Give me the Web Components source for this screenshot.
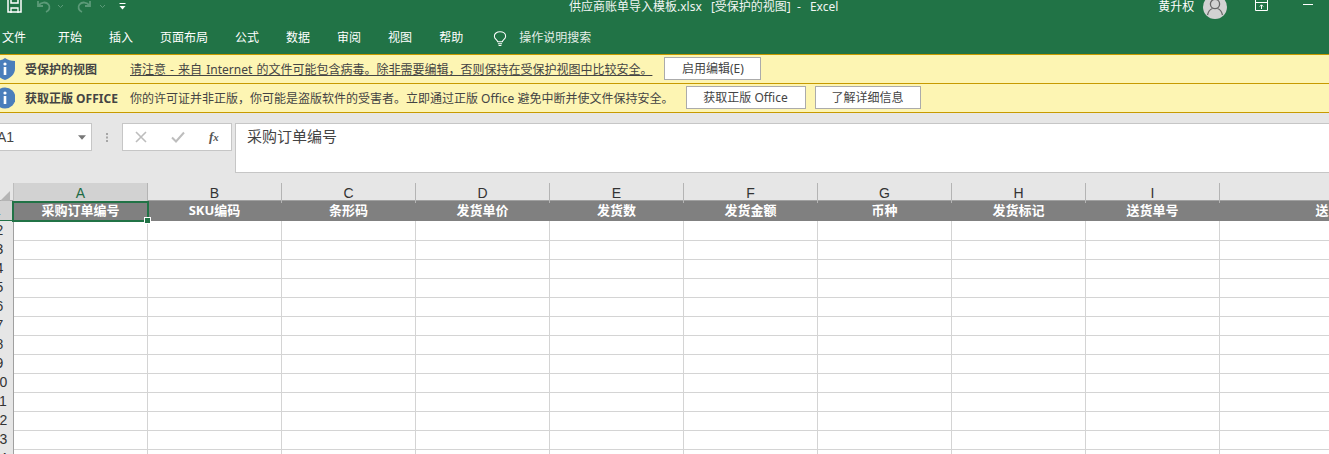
<!DOCTYPE html>
<html>
<head>
<meta charset="utf-8">
<title>Excel</title>
<style>
  html, body { margin: 0; padding: 0; height: 454px; overflow: hidden; background: #e6e6e6; }
  body { font-family: "Noto Sans", "Noto Sans CJK SC", sans-serif; font-size: 12px; color: #444; }
</style>
</head>
<body>
<excel-ribbon></excel-ribbon>
<message-bar heading="受保护的视图" underline>
  请注意 - 来自 Internet 的文件可能包含病毒。除非需要编辑，否则保持在受保护视图中比较安全。
  <bar-button slot="actions" style="margin-left:12px;width:97px">启用编辑(E)</bar-button>
</message-bar>
<message-bar heading="获取正版 OFFICE" round>
  你的许可证并非正版，你可能是盗版软件的受害者。立即通过正版 Office 避免中断并使文件保持安全。
  <bar-button slot="actions" style="margin-left:12px;width:120px">获取正版 Office</bar-button>
  <bar-button slot="actions" style="margin-left:9px;width:106px">了解详细信息</bar-button>
</message-bar>
<formula-bar cell="A1" value="采购订单编号"></formula-bar>
<sheet-grid></sheet-grid>

<script>
const CJK = '"Noto Sans", "Noto Sans CJK SC", sans-serif';

class ExcelRibbon extends HTMLElement {
    constructor() {
        super();
        this.attachShadow({ mode: 'open' });
    }

    connectedCallback() {
        const tabs = ['开始', '插入', '页面布局', '公式', '数据', '审阅', '视图', '帮助'];
        this.shadowRoot.innerHTML = `
            <style>
                :host {
                    display: block;
                    height: 54px;
                    background: #217346;
                    color: #fff;
                    font-family: ${CJK};
                    font-size: 12px;
                    overflow: hidden;
                    white-space: nowrap;
                }
                .title-row {
                    display: grid;
                    grid-template-columns: 569px auto 1fr;
                    height: 27px;
                }
                .qat, .win { display: flex; height: 13px; align-items: flex-start; }
                .qat svg, .win svg { display: block; flex: none; }
                .title { line-height: 13px; color: #f1f6f3; }
                .title span { margin-left: 6px; }
                .title b { font-weight: 400; margin-left: 9px; }
                .win { line-height: 13px; }
                .who { margin-left: 320px; }
                .tabs {
                    display: flex;
                    gap: 27px;
                    height: 22px;
                    line-height: 22px;
                    padding-left: 2px;
                }
                .file { margin-right: 5px; }
                .search { display: flex; color: #e4eee8; }
                .search svg { display: block; margin: 4px 12px 0 3px; }
            </style>
            <div class="title-row">
                <div class="qat">
                    <svg width="15" height="13" style="margin-left:7px" viewBox="0 0 15 13" fill="none" stroke="#fff" stroke-width="1.5">
                        <path d="M1 -1V12H14V-1"/><path d="M4 13V8H11V13" stroke-width="1.3"/><path d="M4 -1V3H11V-1"/>
                    </svg>
                    <svg width="16" height="13" style="margin-left:14px" viewBox="0 0 16 13" fill="none" stroke="#5b9a78" stroke-width="1.8">
                        <path d="M2 1V6H7"/><path d="M2.5 5.5C5 2 10 1.5 12.5 4.5C14.5 7 13.5 10.5 10 12"/>
                    </svg>
                    <svg width="7" height="13" style="margin-left:5px" viewBox="0 0 7 13" fill="none" stroke="#5b9a78"><path d="M1 5L3.5 7.5L6 5"/></svg>
                    <svg width="16" height="13" style="margin-left:12px" viewBox="0 0 16 13" fill="none" stroke="#5b9a78" stroke-width="1.8">
                        <path d="M14 1V6H9"/><path d="M13.5 5.5C11 2 6 1.5 3.5 4.5C1.5 7 2.5 10.5 6 12"/>
                    </svg>
                    <svg width="7" height="13" style="margin-left:7px" viewBox="0 0 7 13" fill="none" stroke="#5b9a78"><path d="M1 5L3.5 7.5L6 5"/></svg>
                    <svg width="7" height="13" style="margin-left:13px" viewBox="0 0 7 13" fill="#fff">
                        <rect x="0.5" y="3" width="6" height="1"/><path d="M0.5 6H6.5L3.5 9.5Z"/>
                    </svg>
                </div>
                <div class="title">供应商账单导入模板.xlsx&nbsp;<span>[受保护的视图]</span>&nbsp; -<b>Excel</b></div>
                <div class="win">
                    <span class="who">黄升权</span>
                    <svg width="24" height="19" style="margin-left:9px" viewBox="0 0 24 19">
                        <circle cx="12" cy="7" r="12" fill="#d2d2d2"/>
                        <circle cx="12" cy="4" r="4.6" fill="none" stroke="#666" stroke-width="1.3"/>
                        <path d="M4.5 15C5.5 10.5 8 9 9.5 8.5M19.5 15C18.5 10.5 16 9 14.5 8.5" fill="none" stroke="#666" stroke-width="1.3"/>
                    </svg>
                    <svg width="13" height="11" style="margin-left:28px" viewBox="0 0 13 11" fill="none" stroke="#fff">
                        <path d="M.5 -1V10.5H12.5V-1M.5 2.5H12.5"/><path d="M6.5 9V5M4.8 6.5L6.5 4.8L8.2 6.5"/>
                    </svg>
                    <svg width="10" height="6" style="margin-left:35px" viewBox="0 0 10 6" stroke="#fff"><path d="M0 4.5H10"/></svg>
                </div>
            </div>
            <div class="tabs">
                <span class="file">文件</span>
                ${tabs.map(t => `<span>${t}</span>`).join('')}
                <span class="search">
                    <svg width="14" height="16" viewBox="0 0 14 17" fill="none" stroke="#fff" stroke-width="1.1">
                        <path d="M4.5 11.5C4.2 9.5 1 8.5 1 5.5C1 2.8 3.6 .8 7 .8C10.4 .8 13 2.8 13 5.5C13 8.5 9.8 9.5 9.5 11.5Z"/>
                        <path d="M4.8 13.5H9.2M5.5 15.5H8.5"/>
                    </svg>操作说明搜索
                </span>
            </div>
        `;
    }
}

class MessageBar extends HTMLElement {
    constructor() {
        super();
        this.attachShadow({ mode: 'open' });
    }

    connectedCallback() {
        const underlined = this.hasAttribute('underline');
        // the licence notice has a round badge, the protected view one a shield
        const badge = this.hasAttribute('round')
            ? '<circle cx="10" cy="11" r="10.5" fill="#4a7ebb"/>'
            : '<path d="M10 0C7.5 2 3.5 3 0 3V11C0 16 4.5 20 10 22C15.5 20 20 16 20 11V3C16.5 3 12.5 2 10 0Z" fill="#4a7ebb"/>';
        this.shadowRoot.innerHTML = `
            <style>
                :host {
                    display: flex;
                    align-items: center;
                    box-sizing: border-box;
                    height: 29px;
                    background: #fdf5b3;
                    border-top: 1px solid #c79a00;
                    font-family: ${CJK};
                    font-size: 12px;
                    color: #444;
                    white-space: nowrap;
                    overflow: hidden;
                }
                svg { display: block; flex: none; margin-left: -5px; }
                .heading { width: 105px; margin-left: 10px; flex: none; font-weight: 700; }
                .text { text-decoration: ${underlined ? 'underline' : 'none'}; word-spacing: ${underlined ? 1 : 0}px; flex: none; }
                .actions { display: flex; flex: none; margin-bottom: 1px; }
            </style>
            <svg width="20" height="22" viewBox="0 0 20 22">
                ${badge}
                <rect x="8.7" y="9" width="2.6" height="8" fill="#fff"/>
                <circle cx="10" cy="6" r="1.6" fill="#fff"/>
            </svg>
            <span class="heading">${this.getAttribute('heading')}</span>
            <span class="text"><slot></slot></span>
            <span class="actions"><slot name="actions"></slot></span>
        `;
    }
}

class BarButton extends HTMLElement {
    constructor() {
        super();
        this.attachShadow({ mode: 'open' });
        this.shadowRoot.innerHTML = `
            <style>
                :host {
                    display: block;
                    box-sizing: border-box;
                    height: 23px;
                    line-height: 21px;
                    text-align: center;
                    background: #fff;
                    border: 1px solid #ababab;
                    color: #444;
                }
            </style>
            <slot></slot>
        `;
    }
}

class FormulaBar extends HTMLElement {
    constructor() {
        super();
        this.attachShadow({ mode: 'open' });
    }

    connectedCallback() {
        this.shadowRoot.innerHTML = `
            <style>
                :host {
                    display: flex;
                    align-items: flex-start;
                    height: 71px;
                    padding-top: 10px;
                    box-sizing: border-box;
                    background: #e6e6e6;
                    border-top: 1px solid #c79a00;
                    font-family: ${CJK};
                    overflow: hidden;
                }
                .box { box-sizing: border-box; background: #fff; border: 1px solid #c6c6c6; flex: none; }
                .name {
                    display: flex;
                    align-items: center;
                    justify-content: space-between;
                    width: 96px;
                    height: 28px;
                    margin-left: -4px;
                    padding: 0 5px 0 0;
                    font: 14px "Liberation Sans", sans-serif;
                    color: #444;
                }
                .grip { display: block; flex: none; margin: 10px 14px 0 14px; }
                .btns { display: flex; width: 110px; height: 28px; }
                .btns svg { display: block; flex: none; margin-top: 7px; }
                .input {
                    flex: 1;
                    height: 50px;
                    margin-left: 3px;
                    padding: 2px 0 0 11px;
                    border-right: none;
                    font-size: 15px;
                    line-height: 20px;
                    color: #444;
                }
                i { font: italic 700 13px "Liberation Serif", serif; margin: 5px 0 0 24px; color: #555; }
            </style>
            <div class="box name"><span>${this.getAttribute('cell')}</span>
                <svg width="8" height="5" viewBox="0 0 9 5" fill="#777"><path d="M0 0H9L4.5 5Z"/></svg>
            </div>
            <svg class="grip" width="2" height="9" viewBox="0 0 2 9" fill="#a6a6a6">
                <rect width="2" height="2"/><rect y="3.5" width="2" height="2"/><rect y="7" width="2" height="2"/>
            </svg>
            <div class="box btns">
                <svg width="12" height="12" style="margin-left:12px" viewBox="0 0 12 12" stroke="#bdbdbd" stroke-width="1.6" fill="none"><path d="M1 1L11 11M11 1L1 11"/></svg>
                <svg width="14" height="12" style="margin-left:24px" viewBox="0 0 14 12" stroke="#bdbdbd" stroke-width="2" fill="none"><path d="M1 6.5L5 10.5L13 1.5"/></svg>
                <i>f<small>x</small></i>
            </div>
            <div class="box input">${this.getAttribute('value')}</div>
        `;
    }
}

class SheetGrid extends HTMLElement {
    constructor() {
        super();
        this.attachShadow({ mode: 'open' });
    }

    connectedCallback() {
        const heads = ['采购订单编号', 'SKU编码', '条形码', '发货单价', '发货数', '发货金额', '币种', '发货标记', '送货单号', '送货日期'];
        const letters = ['A', 'B', 'C', 'D', 'E', 'F', 'G', 'H', 'I', 'J'];
        const blank = heads.map(() => '<div class="cell"></div>').join('');
        let rows = '';
        for (let r = 2; r <= 14; r++) {
            rows += `<div class="row"><div class="num">${r}</div>${blank}</div>`;
        }
        this.shadowRoot.innerHTML = `
            <style>
                :host {
                    display: block;
                    height: 271px;
                    overflow: hidden;
                    background: #fff;
                    font-family: ${CJK};
                }
                .row, .letters, .heads {
                    display: grid;
                    grid-template-columns: 14px repeat(9, 134px) 244px;
                    width: 1464px;
                }
                .letters { height: 18px; background: #e6e6e6; box-sizing: border-box; border-bottom: 1px solid #a0a0a0; }
                .corner { position: relative; border-right: 1px solid #bdbdbd; }
                .corner::after {
                    content: '';
                    position: absolute;
                    right: 3px;
                    bottom: 2px;
                    border: 5px solid transparent;
                    border-right-color: #b5b5b5;
                    border-bottom-color: #b5b5b5;
                }
                .letter {
                    box-sizing: border-box;
                    border-right: 1px solid #b4b4b4;
                    text-align: center;
                    font: 14px/20px "Liberation Sans", sans-serif;
                    color: #333;
                }
                .letter.on { background: #d2d2d2; color: #1d6a44; }
                .heads { height: 20px; background: #808080; }
                .head {
                    position: relative;
                    box-sizing: border-box;
                    padding-right: 1px;
                    text-align: center;
                    font-size: 13px;
                    font-weight: 700;
                    line-height: 19px;
                    color: #fff;
                    white-space: nowrap;
                }
                .num {
                    box-sizing: border-box;
                    width: 28px;
                    margin-left: -14px;
                    border-bottom: 1px solid #a0a0a0;
                    border-right: 1px solid #a0a0a0;
                    background: #e6e6e6;
                    text-align: center;
                    font: 14px/19px "Liberation Sans", sans-serif;
                    color: #333;
                }
                .heads .num { background: #d2d2d2; border-bottom: 1px solid #217346; padding-right: 5px; color: #1d6a44; }
                .row { height: 19px; }
                .cell { box-sizing: border-box; border-right: 1px solid #d4d4d4; border-bottom: 1px solid #d4d4d4; }
                .sel {
                    position: absolute;
                    left: -2px;
                    top: 0;
                    right: -1px;
                    bottom: -1px;
                    border: 2px solid #217346;
                    pointer-events: none;
                }
                .handle {
                    position: absolute;
                    right: -4px;
                    bottom: -4px;
                    width: 5px;
                    height: 5px;
                    background: #217346;
                    border: 1px solid #fff;
                }
            </style>
            <div class="letters">
                <div class="corner"></div>
                ${letters.map((l, i) => `<div class="letter${i === 0 ? ' on' : ''}">${l}</div>`).join('')}
            </div>
            <div class="heads">
                <div class="num">1</div>
                ${heads.map((h, i) => `<div class="head">${h}${i === 0 ? '<div class="sel"><div class="handle"></div></div>' : ''}</div>`).join('')}
            </div>
            ${rows}
        `;
    }
}

customElements.define('excel-ribbon', ExcelRibbon);
customElements.define('message-bar', MessageBar);
customElements.define('bar-button', BarButton);
customElements.define('formula-bar', FormulaBar);
customElements.define('sheet-grid', SheetGrid);
</script>
</body>
</html>
